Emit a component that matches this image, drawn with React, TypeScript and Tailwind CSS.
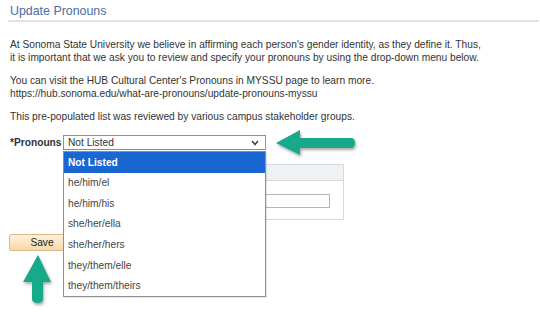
import React from 'react'

const options = [
  'Not Listed',
  'he/him/el',
  'he/him/his',
  'she/her/ella',
  'she/her/hers',
  'they/them/elle',
  'they/them/theirs',
]

function ArrowLeft() {
  return (
    <svg className="absolute left-[268px] top-[124px]" width="100" height="40" viewBox="0 0 100 40">
      <defs>
        <filter id="shl" x="-20%" y="-40%" width="140%" height="180%">
          <feDropShadow dx="1" dy="2" stdDeviation="1.5" floodColor="#000" floodOpacity="0.35" />
        </filter>
      </defs>
      <g filter="url(#shl)" fill="#13a98a">
        <path d="M8 19 L32 6 L32 14 L83 14 Q87 14 87 19 Q87 24 83 24 L32 24 L32 31 Z" />
      </g>
    </svg>
  )
}

function ArrowUp() {
  return (
    <svg className="absolute left-[16px] top-[248px]" width="44" height="62" viewBox="0 0 44 62">
      <defs>
        <filter id="shu" x="-40%" y="-20%" width="180%" height="140%">
          <feDropShadow dx="1" dy="2" stdDeviation="1.5" floodColor="#000" floodOpacity="0.35" />
        </filter>
      </defs>
      <g filter="url(#shu)" fill="#13a98a">
        <path d="M22 7 L35 34 L27 34 L27 51 Q27 55 22 55 Q16 55 16 51 L16 34 L7 34 Z" />
      </g>
    </svg>
  )
}

export default function App() {
  return (
    <div className="relative w-[540px] h-[314px] overflow-hidden bg-white font-['Liberation_Sans',Arial,sans-serif] text-[#333]">
      {/* title */}
      <div className="ml-[8px] mr-px h-[22px] border-b-2 border-[#e2e2e2] pl-[2px] pt-[4px] text-[12.4px] leading-[14px] text-[#4b6da3]">
        Update Pronouns
      </div>

      <div className="px-[10px] pt-[16px] text-[10.2px] leading-[13px]">
        <p>
          At Sonoma State University we believe in affirming each person's gender identity, as they define it. Thus,
          <br />
          it is important that we ask you to review and specify your pronouns by using the drop-down menu below.
        </p>
        <p className="mt-[10px]">
          You can visit the HUB Cultural Center's Pronouns in MYSSU page to learn more.
          <br />
          https://hub.sonoma.edu/what-are-pronouns/update-pronouns-myssu
        </p>
        <p className="mt-[10px]">This pre-populated list was reviewed by various campus stakeholder groups.</p>
      </div>

      {/* pronouns row */}
      <div className="mt-[12px] flex items-center pl-[10px] text-[10.2px]">
        <span className="w-[53px] font-bold">*Pronouns</span>
        <div className="flex h-[15px] w-[203px] items-center justify-between border border-[#8f8f8f] bg-white pl-[4px] pr-[6px]">
          <span>Not Listed</span>
          <svg width="8" height="6" viewBox="0 0 8 6">
            <path d="M1 1 L4 4.5 L7 1" fill="none" stroke="#444" strokeWidth="1.6" />
          </svg>
        </div>
      </div>

      {/* grid behind dropdown */}
      <div className="ml-[70px] mt-[14px] h-[56px] w-[274px] border border-[#d4d9dd] bg-white">
        <div className="h-[16px] border-b border-[#d4d9dd] bg-[#eff2f4]" />
        <div className="flex justify-end pr-[13px] pt-[13px]">
          <div className="h-[14px] w-[160px] border border-[#b5b5b5] bg-white" />
        </div>
      </div>

      {/* save */}
      <div className="mt-[9px] pl-[9px]">
        <button className="h-[17px] w-[66px] rounded-[2px] border border-[#dcb98a] bg-gradient-to-b from-[#fdf1dc] to-[#f7d8a8] text-[10.2px] leading-[15px] text-[#222]">
          Save
        </button>
      </div>

      {/* open dropdown list */}
      <div className="absolute left-[63px] top-[151px] w-[203px] border border-[#8f8f8f] bg-white text-[10.2px] shadow-[1px_1px_1px_rgba(0,0,0,0.1)]">
        {options.map((o, i) => (
          <div
            key={o}
            className={
              i === 0
                ? 'flex h-[20.6px] items-center bg-[#1a66d2] pl-[4px] font-bold text-white'
                : 'flex h-[20.6px] items-center pl-[4px] text-[#444]'
            }
          >
            {o}
          </div>
        ))}
      </div>

      <ArrowLeft />
      <ArrowUp />
    </div>
  )
}
